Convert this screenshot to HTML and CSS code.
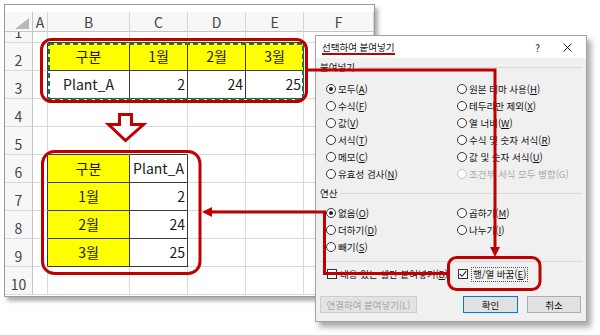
FILE: index.html
```html
<!DOCTYPE html>
<html lang="ko">
<head>
<meta charset="utf-8">
<link rel="stylesheet" href="styles.css">
</head>
<body>
<div class="stage">
  <div class="excel">
    <div class="topstrip"></div>
    <div class="colhead">
      <div class="hc corner"><svg width="14" height="11" viewBox="0 0 14 11"><polygon points="14,0 14,11 0,11" fill="#b9b9b9"/></svg></div>
      <div class="hc">A</div>
      <div class="hc">B</div>
      <div class="hc">C</div>
      <div class="hc">D</div>
      <div class="hc">E</div>
      <div class="hc">F</div>
    </div>
    <div class="viewport">
      <div class="sheet">
        <div class="rh">1</div><div class="c"></div><div class="c bb"></div><div class="c bb"></div><div class="c bb"></div><div class="c bb"></div><div class="c"></div>
        <div class="rh">2</div><div class="c br"></div><div class="c t y">구분</div><div class="c t y">1월</div><div class="c t y">2월</div><div class="c t y">3월</div><div class="c"></div>
        <div class="rh">3</div><div class="c br"></div><div class="c t">Plant_A</div><div class="c t num">2</div><div class="c t num">24</div><div class="c t num">25</div><div class="c"></div>
        <div class="rh">4</div><div class="c"></div><div class="c"></div><div class="c"></div><div class="c"></div><div class="c"></div><div class="c"></div>
        <div class="rh">5</div><div class="c"></div><div class="c bb"></div><div class="c bb"></div><div class="c"></div><div class="c"></div><div class="c"></div>
        <div class="rh">6</div><div class="c br"></div><div class="c t y">구분</div><div class="c t">Plant_A</div><div class="c"></div><div class="c"></div><div class="c"></div>
        <div class="rh">7</div><div class="c br"></div><div class="c t y">1월</div><div class="c t num">2</div><div class="c"></div><div class="c"></div><div class="c"></div>
        <div class="rh">8</div><div class="c br"></div><div class="c t y">2월</div><div class="c t num">24</div><div class="c"></div><div class="c"></div><div class="c"></div>
        <div class="rh">9</div><div class="c br"></div><div class="c t y">3월</div><div class="c t num">25</div><div class="c"></div><div class="c"></div><div class="c"></div>
        <div class="rh">10</div><div class="c"></div><div class="c"></div><div class="c"></div><div class="c"></div><div class="c"></div><div class="c"></div>
      </div>
    </div>
  </div>

  <div class="dialog">
    <div class="titlebar">
      <span class="title">선택하여 붙여넣기</span>
      <span class="help">?</span>
      <svg class="close" width="9" height="9" viewBox="0 0 9 9"><path d="M0.5 0.5 L8.5 8.5 M8.5 0.5 L0.5 8.5" stroke="#222" stroke-width="1"/></svg>
    </div>
    <div class="dbody">
      <div class="group"><span>붙여넣기</span><span class="sep"></span></div>
      <div class="opts">
        <div class="opt"><span class="radio on"></span>모두(<u>A</u>)</div>
        <div class="opt"><span class="radio"></span>원본 테마 사용(<u>H</u>)</div>
        <div class="opt"><span class="radio"></span>수식(<u>F</u>)</div>
        <div class="opt"><span class="radio"></span>테두리만 제외(<u>X</u>)</div>
        <div class="opt"><span class="radio"></span>값(<u>V</u>)</div>
        <div class="opt"><span class="radio"></span>열 너비(<u>W</u>)</div>
        <div class="opt"><span class="radio"></span>서식(<u>T</u>)</div>
        <div class="opt"><span class="radio"></span>수식 및 숫자 서식(<u>R</u>)</div>
        <div class="opt"><span class="radio"></span>메모(<u>C</u>)</div>
        <div class="opt"><span class="radio"></span>값 및 숫자 서식(<u>U</u>)</div>
        <div class="opt"><span class="radio"></span>유효성 검사(<u>N</u>)</div>
        <div class="opt dis"><span class="radio"></span>조건부 서식 모두 병합(G)</div>
      </div>
      <div class="group g2"><span>연산</span><span class="sep"></span></div>
      <div class="opts">
        <div class="opt"><span class="radio on"></span>없음(<u>O</u>)</div>
        <div class="opt"><span class="radio"></span>곱하기(<u>M</u>)</div>
        <div class="opt"><span class="radio"></span>더하기(<u>D</u>)</div>
        <div class="opt"><span class="radio"></span>나누기(<u>I</u>)</div>
        <div class="opt"><span class="radio"></span>빼기(<u>S</u>)</div>
      </div>
      <div class="hline"></div>
      <div class="opts checks">
        <div class="opt"><span class="check"></span>내용 있는 셀만 붙여넣기(<u>B</u>)</div>
        <div class="opt"><span class="check"><svg width="8" height="8" viewBox="0 0 8 8"><path d="M0.8 4 L3 6.3 L7.3 1.2" fill="none" stroke="#222" stroke-width="1.1"/></svg></span><span class="focus">행/열 바꿈(<u>E</u>)</span></div>
      </div>
      <div class="buttons">
        <div class="btn disabled">연결하여 붙여넣기(L)</div>
        <div class="btn primary">확인</div>
        <div class="btn">취소</div>
      </div>
    </div>
  </div>

  <svg class="overlay" width="600" height="335" viewBox="0 0 600 335">
    <rect x="49" y="44" width="254" height="55" fill="none" stroke="#1f7446" stroke-width="2" stroke-dasharray="5 3"/>
    <rect x="41.5" y="39.5" width="265" height="62" rx="10" fill="none" stroke="#c00000" stroke-width="3"/>
    <rect x="42.5" y="151.5" width="157.5" height="122" rx="12" fill="none" stroke="#c00000" stroke-width="3"/>
    <rect x="448.5" y="257.5" width="91.5" height="32" rx="8" fill="none" stroke="#c00000" stroke-width="3"/>
    <polygon points="119.5,114.5 131.5,114.5 131.5,124.5 143.5,124.5 125.5,140.5 108.5,124.5 119.5,124.5" fill="#fff" stroke="#c00000" stroke-width="3" stroke-linejoin="miter"/>
    <path d="M322 54 H395" fill="none" stroke="#c00000" stroke-width="2"/>
    <path d="M306.5 70 H495 V249" fill="none" stroke="#c00000" stroke-width="3"/>
    <polygon points="490,247 500,247 495,257" fill="#c00000"/>
    <path d="M447 273.5 H324.5 V212 H210" fill="none" stroke="#c00000" stroke-width="3"/>
    <polygon points="212,207 212,217 202,212" fill="#c00000"/>
  </svg>
</div>
</body>
</html>
```
FILE: styles.css
```css
html, body {
  margin: 0;
  padding: 0;
}
body {
  width: 600px;
  height: 335px;
  overflow: hidden;
  background: #ffffff;
  font-family: "Noto Sans CJK KR", "Noto Sans", sans-serif;
}
.stage {
  position: relative;
  width: 600px;
  height: 335px;
  padding: 4px 0 0 4px;
  box-sizing: border-box;
}

/* ---------- Excel window ---------- */
.excel {
  width: 371px;
  height: 293px;
  box-sizing: border-box;
  border: 1px solid #9b9b9b;
  box-shadow: 3px 4px 4px rgba(0, 0, 0, 0.32);
  background: #fff;
  display: flex;
  flex-direction: column;
  overflow: hidden;
}
.topstrip {
  height: 7px;
  flex: none;
  background: #fff;
}
.colhead,
.sheet {
  display: grid;
  grid-template-columns: 28px 15px 82px 58px 58px 58px 1fr;
}
.colhead {
  height: 20px;
  flex: none;
  background: #f7f7f7;
  border-bottom: 1px solid #c4c4c4;
  box-sizing: border-box;
}
.hc {
  border-right: 1px solid #d4d4d4;
  font-size: 14px;
  line-height: 20px;
  color: #454545;
  text-align: center;
}
.corner {
  display: flex;
  align-items: flex-end;
  justify-content: flex-end;
  padding: 0 3px 3px 0;
  border-right-color: #c4c4c4;
}
.viewport {
  flex: 1;
  overflow: hidden;
}
.sheet {
  grid-auto-rows: 28px;
  margin-top: -17px;
}
.rh {
  background: #f7f7f7;
  border-right: 1px solid #c4c4c4;
  border-bottom: 1px solid #dadada;
  box-sizing: border-box;
  font-size: 14px;
  line-height: 28px;
  padding-top: 3px;
  color: #454545;
  text-align: center;
}
.c {
  border-right: 1px solid #dadada;
  border-bottom: 1px solid #dadada;
  box-sizing: border-box;
  font-size: 14px;
  line-height: 27px;
  color: #1a1a1a;
  text-align: center;
  white-space: nowrap;
  overflow: hidden;
}
.c.bb { border-bottom-color: #3a3a3a; }
.c.br { border-right-color: #3a3a3a; }
.c.t {
  border-right-color: #3a3a3a;
  border-bottom-color: #3a3a3a;
}
.c.y { background: #ffff00; }
.c.num {
  text-align: right;
  padding-right: 2px;
}

/* ---------- Dialog ---------- */
.dialog {
  position: absolute;
  left: 315px;
  top: 35px;
  width: 272px;
  height: 287px;
  box-sizing: border-box;
  border: 1px solid #a3a3a3;
  background: #f0f0f0;
  box-shadow: 4px 5px 6px rgba(0, 0, 0, 0.35);
  font-size: 9.5px;
  color: #111;
  display: flex;
  flex-direction: column;
}
.titlebar {
  height: 22px;
  flex: none;
  background: #ffffff;
  display: flex;
  align-items: center;
  padding-left: 6px;
}
.title {
  font-size: 9.5px;
  flex: 1;
}
.help {
  font-size: 10px;
  margin-right: 23px;
}
.close {
  margin-right: 14px;
}
.dbody {
  padding: 0 4px 0 4px;
}
.group {
  height: 18px;
  display: flex;
  align-items: center;
  gap: 3px;
  margin-bottom: 4px;
}
.group.g2 {
  margin-top: 2px;
  margin-bottom: 2px;
}
.sep {
  flex: 1;
  border-top: 1px solid #d9d9d9;
  margin-top: 1px;
}
.opts {
  display: grid;
  grid-template-columns: 131px 1fr;
  grid-auto-rows: 17px;
  padding-left: 6px;
}
.opt {
  display: flex;
  align-items: center;
  white-space: nowrap;
}
.opt u {
  text-decoration: underline;
  text-underline-offset: 1px;
}
.opt.dis {
  color: #a8a8a8;
}
.radio {
  width: 10px;
  height: 10px;
  box-sizing: border-box;
  border: 1px solid #333;
  border-radius: 50%;
  background: #fff;
  margin-right: 2px;
  flex: none;
  display: flex;
  align-items: center;
  justify-content: center;
}
.radio.on::after {
  content: "";
  width: 4px;
  height: 4px;
  border-radius: 50%;
  background: #222;
}
.opt.dis .radio {
  border-color: #c6c6c6;
}
.hline {
  border-top: 1px solid #d9d9d9;
  margin-top: 6px;
}
.checks {
  margin-top: 4px;
  grid-auto-rows: 16px;
}
.check {
  width: 10px;
  height: 10px;
  box-sizing: border-box;
  border: 1px solid #333;
  background: #fff;
  margin: 0 3px 0 1px;
  flex: none;
  display: flex;
  align-items: center;
  justify-content: center;
}
.focus {
  border: 1px dotted #555;
  padding: 0 1px;
  line-height: 13px;
}
.buttons {
  display: flex;
  margin-top: 14px;
  gap: 9px;
  padding-right: 1px;
}
.btn {
  height: 17px;
  width: 54px;
  box-sizing: border-box;
  border: 1px solid #adadad;
  background: #e1e1e1;
  display: flex;
  align-items: center;
  justify-content: center;
  white-space: nowrap;
}
.btn.disabled {
  width: 97px;
  margin-right: auto;
  color: #a6a6a6;
  border-color: #cdcdcd;
  background: #e3e3e3;
}
.btn.primary {
  width: 55px;
  border-color: #0078d7;
}

/* ---------- Annotation overlay ---------- */
.overlay {
  position: absolute;
  left: 0;
  top: 0;
  pointer-events: none;
}
```
